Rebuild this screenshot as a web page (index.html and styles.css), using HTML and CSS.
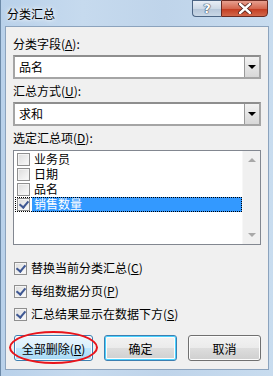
FILE: index.html
```html
<!DOCTYPE html>
<html lang="zh-CN">
<head>
    <meta charset="UTF-8">
    <title>分类汇总</title>
    <link rel="stylesheet" href="styles.css">
</head>
<body>
    <div class="window">
        <div class="titlebar">
            <span class="title">分类汇总</span>
            <div class="caption-buttons">
                <div class="cap-btn help">?</div>
                <div class="cap-btn close">
                    <svg width="14" height="11" viewBox="0 0 14 11">
                        <path d="M2 1 L12 10 M12 1 L2 10" stroke="#4a1a14" stroke-width="4" stroke-linecap="round"/>
                        <path d="M2 1 L12 10 M12 1 L2 10" stroke="#fff" stroke-width="2.4" stroke-linecap="round"/>
                    </svg>
                </div>
            </div>
        </div>

        <div class="client">
            <div class="label">分类字段(<u>A</u>):</div>
            <div class="combo">
                <span class="combo-text">品名</span>
                <span class="combo-arrow"><i></i></span>
            </div>

            <div class="label">汇总方式(<u>U</u>):</div>
            <div class="combo">
                <span class="combo-text">求和</span>
                <span class="combo-arrow"><i></i></span>
            </div>

            <div class="label">选定汇总项(<u>D</u>):</div>
            <div class="listbox">
                <div class="items">
                    <div class="item"><span class="box"></span><span class="item-text">业务员</span></div>
                    <div class="item"><span class="box"></span><span class="item-text">日期</span></div>
                    <div class="item"><span class="box"></span><span class="item-text">品名</span></div>
                    <div class="item focused"><span class="box checked"></span><span class="item-text selected">销售数量</span></div>
                </div>
                <div class="scrollbar">
                    <span class="arrow up"></span>
                    <span class="arrow down"></span>
                </div>
            </div>

            <div class="options">
                <div class="option"><span class="box checked"></span>替换当前分类汇总(<u>C</u>)</div>
                <div class="option"><span class="box checked"></span>每组数据分页(<u>P</u>)</div>
                <div class="option"><span class="box checked"></span>汇总结果显示在数据下方(<u>S</u>)</div>
            </div>

            <div class="buttons">
                <div class="btn-wrap">
                    <div class="btn primary">全部删除(<u>R</u>)</div>
                    <div class="ellipse"></div>
                </div>
                <div class="btn default">确定</div>
                <div class="btn">取消</div>
            </div>
        </div>
    </div>
</body>
</html>
```

FILE: styles.css
```css
html, body {
    margin: 0;
    padding: 0;
}

body {
    width: 273px;
    height: 376px;
    overflow: hidden;
    font-family: "Noto Sans CJK SC", "Microsoft YaHei", sans-serif;
    font-size: 12px;
    color: #000;
}

.window {
    height: 376px;
    box-sizing: border-box;
    display: flex;
    flex-direction: column;
    background: linear-gradient(to right, #b9d1ea 0%, #c6daee 30%, #bfd4ea 60%, #c8dcef 100%);
    border-left: 1px solid #6d8aa8;
}

.titlebar {
    height: 26px;
    flex: none;
    display: flex;
    justify-content: space-between;
    align-items: flex-start;
}

.title {
    padding: 6px 0 0 6px;
    line-height: 16px;
    color: #000;
    text-shadow: 0 0 6px #fff, 0 0 3px #fff;
}

.caption-buttons {
    display: flex;
    margin-right: 5px;
}

.cap-btn {
    height: 17px;
    box-sizing: border-box;
    border: 1px solid #4c6584;
    display: flex;
    align-items: center;
    justify-content: center;
}

.help {
    width: 29px;
    border-radius: 0 0 0 4px;
    border-right: none;
    background: linear-gradient(#e8eef6 0%, #cdd9e6 50%, #b4c5d8 51%, #c9d7e6 100%);
    font-family: "DejaVu Sans", sans-serif;
    font-weight: bold;
    font-size: 13px;
    color: #fff;
    text-shadow: 0 0 1px #2b3f58, 0 0 1px #2b3f58, 0 0 1px #2b3f58;
}

.close {
    width: 47px;
    border-radius: 0 0 4px 0;
    border-color: #6a2a21;
    background: linear-gradient(#e7a08f 0%, #d4674f 50%, #c23a1f 51%, #d2684b 100%);
}

.client {
    flex: 1;
    margin: 0 4px 6px 4px;
    border: 1px solid #8ca3bd;
    background: #f0f0f0;
    padding: 9px 7px 0 7px;
    display: flex;
    flex-direction: column;
}

.label {
    line-height: 16px;
    margin-bottom: 3px;
}

u {
    text-decoration: underline;
    text-underline-offset: 1px;
}

.combo {
    height: 24px;
    box-sizing: border-box;
    border: 2px solid #a5a5a5;
    border-top-color: #8e8e8e;
    background: #fff;
    display: flex;
    align-items: center;
    margin-bottom: 4px;
}

.combo-text {
    flex: 1;
    padding-left: 4px;
    line-height: 16px;
}

.combo-arrow {
    width: 15px;
    height: 20px;
    box-sizing: border-box;
    border-left: 1px solid #9a9a9a;
    background: linear-gradient(#f2f2f2, #d8d8d8);
    display: flex;
    align-items: center;
    justify-content: center;
}

.combo-arrow i {
    width: 0;
    height: 0;
    border-left: 4px solid transparent;
    border-right: 4px solid transparent;
    border-top: 4px solid #000;
}

.listbox {
    height: 95px;
    box-sizing: border-box;
    border: 1px solid #828790;
    background: #fff;
    display: flex;
    margin-top: 1px;
}

.items {
    flex: 1;
    padding: 1px 0 0 1px;
}

.item {
    height: 15px;
    display: flex;
    align-items: center;
    box-sizing: border-box;
}

.item.focused {
    outline: 1px dotted #000;
    outline-offset: -1px;
}

.item .box {
    margin: 0 2px 0 2px;
}

/* primary font with a short box keeps the 15px rows from overlapping */
.item-text {
    flex: 1;
    height: 15px;
    overflow: hidden;
    font-family: "Liberation Sans", "Noto Sans CJK SC", sans-serif;
    line-height: 17px;
    padding-left: 2px;
}

.item-text.selected {
    background: #3399ff;
    color: #fff;
}

.box {
    width: 13px;
    height: 13px;
    box-sizing: border-box;
    border: 1px solid #8f8f8f;
    background: linear-gradient(135deg, #dcdcdc, #fbfbfb);
    box-shadow: inset 0 0 0 1px #f4f4f4;
    flex: none;
    position: relative;
}

.box.checked::after {
    content: "";
    position: absolute;
    left: 3px;
    top: 0px;
    width: 4px;
    height: 7px;
    border-right: 2px solid #3f5893;
    border-bottom: 2px solid #3f5893;
    transform: rotate(40deg);
}

.scrollbar {
    width: 17px;
    background: #f0f0f0;
    border-left: 1px solid #f7f7f7;
    display: flex;
    flex-direction: column;
    justify-content: space-between;
    align-items: center;
    padding: 7px 0 7px;
}

.arrow {
    width: 0;
    height: 0;
    border-left: 4px solid transparent;
    border-right: 4px solid transparent;
}

.arrow.up {
    border-bottom: 4px solid #a8a8a8;
}

.arrow.down {
    border-top: 4px solid #a8a8a8;
}

.options {
    padding-top: 15px;
    display: flex;
    flex-direction: column;
    gap: 7px;
}

.option {
    height: 16px;
    line-height: 16px;
    display: flex;
    align-items: center;
}

.option .box {
    margin: 0 4px 0 1px;
}

.buttons {
    display: flex;
    gap: 11px;
    margin-top: 13px;
    padding-left: 1px;
}

.btn-wrap {
    position: relative;
}

.btn {
    width: 73px;
    height: 26px;
    box-sizing: border-box;
    border: 1px solid #707070;
    border-radius: 3px;
    background: linear-gradient(#f2f2f2 0%, #ebebeb 50%, #dddddd 51%, #cfcfcf 100%);
    box-shadow: inset 0 0 0 1px #fcfcfc;
    display: flex;
    align-items: center;
    justify-content: center;
}

.btn.primary {
    width: 79px;
    border-color: #3c7fb1;
    background: linear-gradient(#eaf6fd 0%, #d9f0fc 50%, #bee6fd 51%, #a7d9f5 100%);
}

.btn.default {
    border-color: #3c7fb1;
    box-shadow: inset 0 0 0 1px #48d1ff, inset 0 0 0 2px #fcfcfc;
}

.ellipse {
    position: absolute;
    left: -5px;
    top: -4px;
    width: 89px;
    height: 33px;
    box-sizing: border-box;
    border: 2px solid #e8141b;
    border-radius: 50%;
}
```
